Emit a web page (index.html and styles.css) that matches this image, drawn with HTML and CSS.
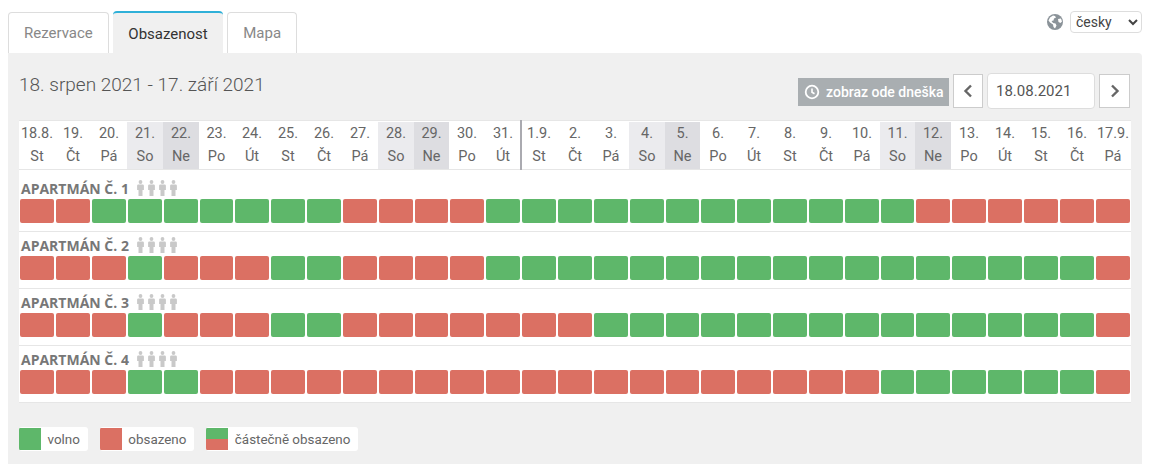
FILE: index.html
```html
<!DOCTYPE html>
<html lang="cs">
<head>
<meta charset="utf-8">
<title>Obsazenost</title>
<link rel="stylesheet" href="styles.css">
</head>
<body>
<div class="top">
  <nav class="tabs">
    <a class="tab">Rezervace</a>
    <a class="tab active">Obsazenost</a>
    <a class="tab">Mapa</a>
  </nav>
  <div class="lang">
    <svg class="globe" viewBox="0 0 16 16"><circle cx="8" cy="8" r="8" fill="#8b9399"/><path d="M3 3.500l3-2 2 .5 1 1.500-2 1-.5 2-2 .5L6 9l2.500.5 1 2-1.500 3-1.500-1.500-.5-2.500L3 8.500 1.500 6.500z M11 5l3-.5 1 3-1.500 1.500L11.500 8z" fill="#fff"/></svg>
    <select class="langsel"><option>česky</option></select>
  </div>
</div>
<main class="panel">
  <div class="head">
    <h1 class="title">18. srpen 2021 - 17. září 2021</h1>
    <div class="controls">
      <a class="today"><svg class="clock" viewBox="0 0 16 16"><circle cx="8" cy="8" r="6.300" fill="none" stroke="#fff" stroke-width="1.800"/><path d="M8 4.500V8.300l2.500 1.500" fill="none" stroke="#fff" stroke-width="1.600"/></svg>zobraz ode dneška</a>
      <a class="nav prev"><svg viewBox="0 0 12 16" class="chev"><path d="M9 2.500L3.500 8 9 13.500" fill="none" stroke="#666" stroke-width="2.400"/></svg></a>
      <input class="date" value="18.08.2021">
      <a class="nav"><svg viewBox="0 0 12 16" class="chev"><path d="M3 2.500L8.500 8 3 13.500" fill="none" stroke="#666" stroke-width="2.400"/></svg></a>
    </div>
  </div>
  <div class="table">
    <div class="days">
      <div class="d"><b>18.8.</b><i>St</i></div><div class="d"><b>19.</b><i>Čt</i></div><div class="d"><b>20.</b><i>Pá</i></div><div class="d so"><b>21.</b><i>So</i></div><div class="d ne"><b>22.</b><i>Ne</i></div><div class="d"><b>23.</b><i>Po</i></div><div class="d"><b>24.</b><i>Út</i></div><div class="d"><b>25.</b><i>St</i></div><div class="d"><b>26.</b><i>Čt</i></div><div class="d"><b>27.</b><i>Pá</i></div><div class="d so"><b>28.</b><i>So</i></div><div class="d ne"><b>29.</b><i>Ne</i></div><div class="d"><b>30.</b><i>Po</i></div><div class="d last"><b>31.</b><i>Út</i></div><div class="d"><b>1.9.</b><i>St</i></div><div class="d"><b>2.</b><i>Čt</i></div><div class="d"><b>3.</b><i>Pá</i></div><div class="d so"><b>4.</b><i>So</i></div><div class="d ne"><b>5.</b><i>Ne</i></div><div class="d"><b>6.</b><i>Po</i></div><div class="d"><b>7.</b><i>Út</i></div><div class="d"><b>8.</b><i>St</i></div><div class="d"><b>9.</b><i>Čt</i></div><div class="d"><b>10.</b><i>Pá</i></div><div class="d so"><b>11.</b><i>So</i></div><div class="d ne"><b>12.</b><i>Ne</i></div><div class="d"><b>13.</b><i>Po</i></div><div class="d"><b>14.</b><i>Út</i></div><div class="d"><b>15.</b><i>St</i></div><div class="d"><b>16.</b><i>Čt</i></div><div class="d"><b>17.9.</b><i>Pá</i></div>
    </div>
    <section class="room first">
      <div class="name">APARTMÁN Č. 1<span class="people"><svg viewBox="0 0 7 16"><use href="#person"/></svg><svg viewBox="0 0 7 16"><use href="#person"/></svg><svg viewBox="0 0 7 16"><use href="#person"/></svg><svg viewBox="0 0 7 16"><use href="#person"/></svg></span></div>
      <div class="bars"><span class="r"></span><span class="r"></span><span class="g"></span><span class="g"></span><span class="g"></span><span class="g"></span><span class="g"></span><span class="g"></span><span class="g"></span><span class="r"></span><span class="r"></span><span class="r"></span><span class="r"></span><span class="g"></span><span class="g"></span><span class="g"></span><span class="g"></span><span class="g"></span><span class="g"></span><span class="g"></span><span class="g"></span><span class="g"></span><span class="g"></span><span class="g"></span><span class="g"></span><span class="r"></span><span class="r"></span><span class="r"></span><span class="r"></span><span class="r"></span><span class="r"></span></div>
    </section>
    <section class="room">
      <div class="name">APARTMÁN Č. 2<span class="people"><svg viewBox="0 0 7 16"><use href="#person"/></svg><svg viewBox="0 0 7 16"><use href="#person"/></svg><svg viewBox="0 0 7 16"><use href="#person"/></svg><svg viewBox="0 0 7 16"><use href="#person"/></svg></span></div>
      <div class="bars"><span class="r"></span><span class="r"></span><span class="r"></span><span class="g"></span><span class="r"></span><span class="r"></span><span class="r"></span><span class="g"></span><span class="g"></span><span class="r"></span><span class="r"></span><span class="r"></span><span class="r"></span><span class="g"></span><span class="g"></span><span class="g"></span><span class="g"></span><span class="g"></span><span class="g"></span><span class="g"></span><span class="g"></span><span class="g"></span><span class="g"></span><span class="g"></span><span class="g"></span><span class="g"></span><span class="g"></span><span class="g"></span><span class="g"></span><span class="g"></span><span class="r"></span></div>
    </section>
    <section class="room">
      <div class="name">APARTMÁN Č. 3<span class="people"><svg viewBox="0 0 7 16"><use href="#person"/></svg><svg viewBox="0 0 7 16"><use href="#person"/></svg><svg viewBox="0 0 7 16"><use href="#person"/></svg><svg viewBox="0 0 7 16"><use href="#person"/></svg></span></div>
      <div class="bars"><span class="r"></span><span class="r"></span><span class="r"></span><span class="g"></span><span class="r"></span><span class="r"></span><span class="r"></span><span class="g"></span><span class="g"></span><span class="r"></span><span class="r"></span><span class="r"></span><span class="r"></span><span class="r"></span><span class="r"></span><span class="r"></span><span class="g"></span><span class="g"></span><span class="g"></span><span class="g"></span><span class="g"></span><span class="g"></span><span class="g"></span><span class="g"></span><span class="g"></span><span class="g"></span><span class="g"></span><span class="g"></span><span class="g"></span><span class="g"></span><span class="r"></span></div>
    </section>
    <section class="room">
      <div class="name">APARTMÁN Č. 4<span class="people"><svg viewBox="0 0 7 16"><use href="#person"/></svg><svg viewBox="0 0 7 16"><use href="#person"/></svg><svg viewBox="0 0 7 16"><use href="#person"/></svg><svg viewBox="0 0 7 16"><use href="#person"/></svg></span></div>
      <div class="bars"><span class="r"></span><span class="r"></span><span class="r"></span><span class="g"></span><span class="g"></span><span class="r"></span><span class="r"></span><span class="r"></span><span class="r"></span><span class="r"></span><span class="r"></span><span class="r"></span><span class="r"></span><span class="r"></span><span class="r"></span><span class="r"></span><span class="r"></span><span class="r"></span><span class="r"></span><span class="r"></span><span class="r"></span><span class="r"></span><span class="r"></span><span class="r"></span><span class="g"></span><span class="g"></span><span class="g"></span><span class="g"></span><span class="g"></span><span class="g"></span><span class="r"></span></div>
    </section>
  </div>
  <div class="legend">
    <div class="item"><span class="sw green"></span>volno</div>
    <div class="item"><span class="sw red"></span>obsazeno</div>
    <div class="item"><span class="sw part"></span>částečně obsazeno</div>
  </div>
</main>
<svg class="defs" width="0" height="0"><defs><symbol id="person" viewBox="0 0 7 16"><circle cx="3.500" cy="2" r="1.900" fill="#c9c9c9"/><path d="M1.300 4.500h4.400a1.200 1.200 0 0 1 1.200 1.200V10H5.500v6h-4v-6H.1V5.700a1.200 1.200 0 0 1 1.200-1.200z" fill="#c9c9c9"/></symbol></defs></svg>
</body>
</html>
```
FILE: styles.css
```css
* { box-sizing: border-box; }
html, body { margin: 0; padding: 0; }
body {
  background: #fff;
  font-family: Roboto, "Liberation Sans", sans-serif;
  font-size: 14.500px;
  color: #666;
  height: 464px;
  overflow: hidden;
  padding: 0 8px;
}
.top { display: flex; justify-content: space-between; height: 53px; }
.tabs { display: flex; gap: 4px; padding-top: 12px; }
.tab {
  display: block;
  height: 41px;
  padding: 0 15px;
  line-height: 41px;
  font-size: 15px;
  color: #888;
  border: 1px solid #ddd;
  border-bottom: 0;
  border-radius: 4px 4px 0 0;
  background: #fff;
}
.tab.active {
  margin-top: -1px;
  height: 42px;
  line-height: 42px;
  color: #333;
  background: #f0f0f0;
  border: 0;
  border-top: 2px solid #2fb0d8;
  padding: 0 15.500px;
}
.lang { display: flex; align-items: flex-start; gap: 7px; padding-top: 11px; }
.globe { width: 16px; height: 16px; margin-top: 3px; }
.langsel {
  width: 72px;
  height: 22px;
  font-family: Roboto, sans-serif;
  font-size: 14px;
  color: #444;
  background: #fff;
  border: 1px solid #ddd;
  border-radius: 4px;
  padding-left: 1px;
}
.panel {
  background: #f0f0f0;
  height: 411px;
  border-radius: 0 4px 0 0;
  padding: 20px 12px 0 11px;
}
.head { display: flex; justify-content: space-between; height: 47px; }
.title {
  margin: 0;
  font-size: 19px;
  font-weight: 300;
  line-height: 24px;
  color: #555;
}
.controls { display: flex; align-items: flex-start; }
.today {
  display: flex;
  align-items: center;
  height: 28px;
  width: 151px;
  margin-top: 5px;
  padding-left: 6px;
  background: #a9aeb1;
  color: #fff;
  font-size: 14px;
  font-weight: 500;
  white-space: nowrap;
}
.clock { width: 16px; height: 16px; margin-right: 6px; }
.nav {
  display: flex;
  align-items: center;
  justify-content: center;
  width: 31px;
  height: 34px;
  margin: 1px 0 0 4px;
  background: #fff;
  border: 1px solid #ccc;
}
.nav.prev { width: 30px; }
.chev { width: 12px; height: 16px; }
.date {
  width: 108px;
  height: 36px;
  margin-left: 4px;
  border: 1px solid #ddd;
  border-radius: 4px;
  padding: 0 8px;
  font-family: Roboto, sans-serif;
  font-size: 15px;
  color: #555;
  background: #fff;
}
.table {
  --cols: repeat(5, 36px) 35px repeat(5, 36px) 35px repeat(6, 36px) 35px repeat(5, 36px) 35px repeat(6, 36px);
  background: #fff;
  border-top: 1px solid #e6e6e6;
  width: 1112px;
}
.days { display: grid; grid-template-columns: var(--cols); height: 49px; padding-top: 1px; border-bottom: 1px solid #e6e6e6; }
.d { text-align: center; position: relative; }
.d b, .d i { display: block; font-weight: 400; font-style: normal; line-height: 23px; }
.d.so { background: #ebebee; }
.d.ne { background: #dddde1; }
.d.last::after {
  content: "";
  position: absolute;
  top: -2px;
  bottom: -1px;
  right: -1px;
  width: 2px;
  background: #aaaab0;
}
.room { height: 57px; padding-top: 4px; border-bottom: 1px solid #e6e6e6; }
.room.first { height: 62px; padding-top: 9px; }
.name {
  display: flex;
  align-items: center;
  height: 20px;
  padding: 0 0 2px 2px;
  font-family: "Open Sans", sans-serif;
  font-weight: 700;
  font-size: 14px;
  color: #777;
  white-space: pre;
}
.people { display: flex; gap: 4px; margin-left: 8px; }
.people svg { width: 7px; height: 16px; }
.bars { display: grid; grid-template-columns: var(--cols); height: 24px; }
.bars span { margin: 0 1px; border-radius: 2px; }
.r { background: #db7063; }
.g { background: #5eb76a; }
.legend { display: flex; gap: 12px; margin-top: 24px; font-size: 13.400px; }
.item {
  display: flex;
  align-items: center;
  height: 24px;
  padding-right: 8px;
  background: #fff;
  border-radius: 3px;
  overflow: hidden;
}
.sw { width: 22px; height: 22px; margin-right: 6.500px; margin-top: 1px; align-self: flex-start; }
.green { background: #5eb76a; }
.red { background: #db7063; }
.part { background: linear-gradient(#5eb76a 50%, #db7063 50%); }
.defs { position: absolute; }
```
